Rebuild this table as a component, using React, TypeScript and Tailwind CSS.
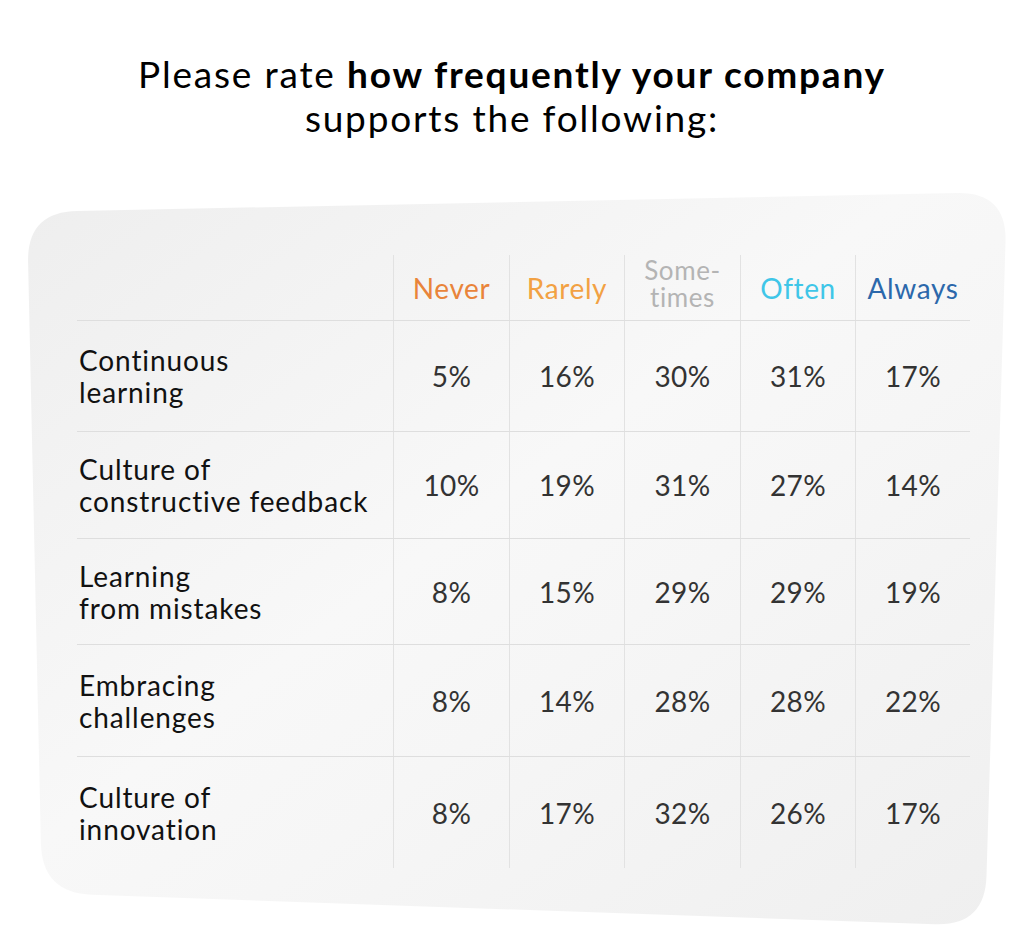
import React from "react";

const headers: { label: React.ReactNode; cls: string }[] = [
  { label: "Never", cls: "text-[#e9843a]" },
  { label: "Rarely", cls: "text-[#f2a143]" },
  {
    label: (
      <span className="flex flex-col pb-[8px] text-[26px]">
        <span className="block h-[27px] leading-[27px]">Some-</span>
        <span className="block h-[27px] leading-[27px]">times</span>
      </span>
    ),
    cls: "text-[#b4b4b4]",
  },
  { label: "Often", cls: "text-[#3fc6e8]" },
  { label: "Always", cls: "text-[#2c68ab]" },
];

const rows: { a: string; b: string; v: string[]; h: string }[] = [
  { a: "Continuous", b: "learning", v: ["5%", "16%", "30%", "31%", "17%"], h: "h-[111px]" },
  { a: "Culture of", b: "constructive feedback", v: ["10%", "19%", "31%", "27%", "14%"], h: "h-[107px]" },
  { a: "Learning", b: "from mistakes", v: ["8%", "15%", "29%", "29%", "19%"], h: "h-[106px]" },
  { a: "Embracing", b: "challenges", v: ["8%", "14%", "28%", "28%", "22%"], h: "h-[112px]" },
  { a: "Culture of", b: "innovation", v: ["8%", "17%", "32%", "26%", "17%"], h: "h-[111px]" },
];

const cols = "grid grid-cols-[316px_116px_115px_116px_115px_115px]";

export default function App() {
  return (
    <div
      className="relative w-[1024px] h-[947px] bg-white overflow-hidden"
      style={{ fontFamily: "Lato, 'Noto Sans', sans-serif" }}
    >
      <svg
        className="absolute left-0 top-0"
        width="1024"
        height="947"
        viewBox="0 0 1024 947"
      >
        <defs>
          <linearGradient id="cardg" x1="0" y1="0" x2="1" y2="1">
            <stop offset="0" stopColor="#eeeeee" />
            <stop offset="0.45" stopColor="#f8f8f8" />
            <stop offset="0.6" stopColor="#f6f6f6" />
            <stop offset="1" stopColor="#efefef" />
          </linearGradient>
        </defs>
        <path
          d="M 77 211 L 957 193 Q 1007 192 1005.5 242 L 986.5 876 Q 985 926 935 924.25 L 92 894.75 Q 42 893 40.9 843 L 28.1 262 Q 27 212 77 211 Z"
          fill="url(#cardg)"
        />
      </svg>

      <div className="relative">
        <h1 className="pt-[52px] text-center text-[37px] leading-[44px] text-black tracking-[1.8px]">
          Please rate <span className="font-bold">how frequently your company</span>
          <br />
          supports the following:
        </h1>

        <div className="mt-[115px] ml-[77px] w-[893px] text-[28px] tracking-[0.6px]">
          <div className={`${cols} h-[66px] border-b border-[#dedede]`}>
            <div />
            {headers.map((h, i) => (
              <div
                key={i}
                className={`flex items-center justify-center border-l border-[#e2e2e2] text-center leading-[30px] ${h.cls}`}
              >
                {h.label}
              </div>
            ))}
          </div>
          {rows.map((r, i) => (
            <div
              key={i}
              className={`${cols} ${r.h} ${i < rows.length - 1 ? "border-b border-[#dedede]" : ""}`}
            >
              <div className="flex flex-col justify-center pl-[2px] text-[#111111] leading-[32px] tracking-[0.9px]">
                <span>{r.a}</span>
                <span>{r.b}</span>
              </div>
              {r.v.map((v, j) => (
                <div
                  key={j}
                  className="flex items-center justify-center border-l border-[#e2e2e2] text-[#333333] tracking-[0.3px]"
                >
                  {v}
                </div>
              ))}
            </div>
          ))}
        </div>
      </div>
    </div>
  );
}
